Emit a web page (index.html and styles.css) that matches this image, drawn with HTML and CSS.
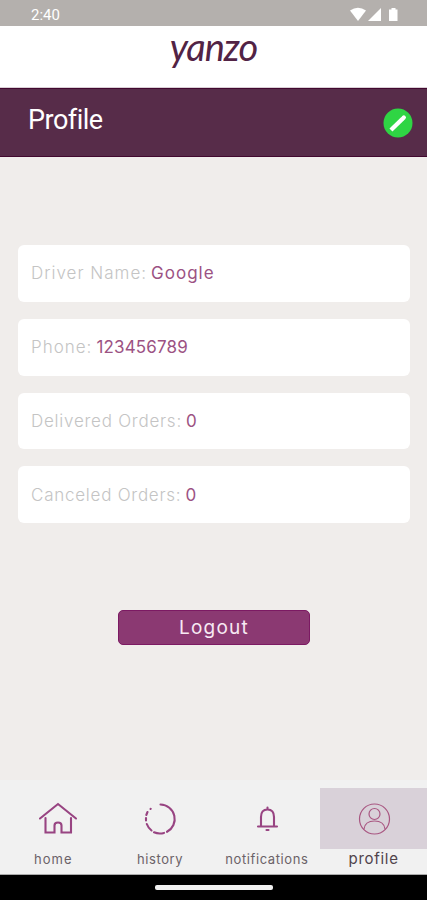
FILE: index.html
```html
<!DOCTYPE html>
<html lang="en">
  <head>
    <meta charset="utf-8">
    <title>Yanzo - Profile</title>
    <link rel="stylesheet" href="styles.css">
  </head>
  <body>
    <div class="statusbar">
      <span>2:40</span>
      <svg class="status-icons" width="50" height="16" viewBox="0 0 50 16">
        <path d="M0 3.500Q8 -2 16 3.500L8 14Z"/>
        <path d="M31 1V14H18Z"/>
        <path d="M39 2.500h2.500V1h4v1.500h2V14H39Z"/>
      </svg>
    </div>

    <header class="brand"><span class="logo">yanzo</span></header>

    <div class="titlebar">
      <h1>Profile</h1>
      <button class="edit" aria-label="Edit">
        <svg width="30" height="30" viewBox="0 0 30 30">
          <circle cx="15" cy="15" r="14.500" fill="#2fd544"/>
          <path d="M9.500 20.500L18.300 12" stroke="#fff" stroke-width="4.300" stroke-linecap="square"/>
          <path d="M20.400 10L20.800 9.600" stroke="#fff" stroke-width="4.300" stroke-linecap="round"/>
        </svg>
      </button>
    </div>

    <main>
      <ul class="details">
        <li><span class="label driver">Driver Name:</span><span class="value name">Google</span></li>
        <li><span class="label phone">Phone:</span><span class="value number">123456789</span></li>
        <li><span class="label delivered">Delivered Orders:</span><span class="value">0</span></li>
        <li><span class="label canceled">Canceled Orders:</span><span class="value">0</span></li>
      </ul>
      <button class="logout">Logout</button>
    </main>

    <!-- Bottom navigation -->
    <nav class="tabs">
      <a class="tab">
        <span class="tab-icon home-icon">
          <svg width="40" height="36" viewBox="0 0 40 36">
            <path d="M2 17.500L20 3L38 17.500M7.500 17V31.500H16.500V24.500Q16.500 21.500 20 21.500Q23.500 21.500 23.500 24.500V31.500H33V17" stroke-width="2.100"/>
          </svg>
        </span>
        <span class="tab-label home">home</span>
      </a>
      <a class="tab">
        <span class="tab-icon">
          <svg width="36" height="36" viewBox="0 0 36 36">
            <path d="M18.500 3.500A14.500 14.500 0 0 1 25 30.800M22 31.900A14.500 14.500 0 0 1 12 31.300M9.500 29.500A14.500 14.500 0 0 1 4.800 23M4 19.500V17M4.300 14L5.500 11M8.500 8L8.700 7.800" stroke-width="2.100"/>
          </svg>
        </span>
        <span class="tab-label history">history</span>
      </a>
      <a class="tab">
        <span class="tab-icon">
          <svg width="24" height="30" viewBox="0 0 24 30">
            <path d="M3 22.500H22M6 22V13Q6 5.500 12.500 5.500Q19 5.500 19 13V22M12.500 3.500V5M11.500 26H13.500" stroke-width="2.100"/>
          </svg>
        </span>
        <span class="tab-label notifications">notifications</span>
      </a>
      <a class="tab active">
        <span class="tab-icon">
          <svg width="36" height="36" viewBox="0 0 36 36" stroke-width="1.200">
            <circle cx="18.500" cy="18" r="15"/>
            <circle cx="18.500" cy="13" r="5.500"/>
            <path d="M8 28Q9 20 18.500 20Q28 20 29 28"/>
          </svg>
        </span>
        <span class="tab-label profile">profile</span>
      </a>
    </nav>

    <div class="gesture"><span class="handle"></span></div>
  </body>
</html>
```

FILE: styles.css
```css
* {
  box-sizing: border-box;
}

body {
  margin: 0;
  height: 900px;
  display: flex;
  flex-direction: column;
  overflow: hidden;
  background-color: #f0edeb;
  font-family: Inter, sans-serif;
}

button {
  border: none;
  padding: 0;
  cursor: pointer;
}

.statusbar {
  height: 26px;
  padding: 4px 27px 0 31px;
  display: flex;
  justify-content: space-between;
  align-items: center;
  background-color: #b4b0ad;
  color: white;
  font: 15px Roboto, sans-serif;
}

.status-icons {
  fill: white;
}

.brand {
  height: 62px;
  display: flex;
  justify-content: center;
  background-color: white;
  border-bottom: 1px solid #d9d0d5;
}

.logo {
  font: italic 38px/40px Lato, sans-serif;
  letter-spacing: -1px;
  color: #522345;
}

.titlebar {
  height: 69px;
  padding: 0 14px 0 28px;
  display: flex;
  justify-content: space-between;
  align-items: center;
  background-color: #572c49;
  border-top: 1px solid #42082f;
  border-bottom: 1px solid #42082f;
}

.titlebar h1 {
  margin: 0 0 5px;
  color: white;
  font: 27px Roboto, sans-serif;
  letter-spacing: -0.500px;
}

.edit {
  height: 30px;
  background: none;
}

main {
  flex: 1;
  padding: 88px 17px 0 18px;
}

.details {
  margin: 0;
  padding: 0;
  list-style: none;
  display: grid;
  gap: 17px;
}

.details li {
  height: 56.800px;
  padding: 0 13px;
  display: flex;
  align-items: center;
  gap: 4px;
  border-radius: 6px;
  background-color: white;
  font-size: 17px;
}

.label {
  color: #c4c4c4;
  font-weight: 300;
}

.value {
  color: #9c5283;
}

.driver,
.phone,
.name {
  letter-spacing: 1px;
}

.number {
  letter-spacing: 0.150px;
}

.delivered,
.canceled {
  letter-spacing: 0.750px;
}

.logout {
  display: block;
  width: 192px;
  height: 35px;
  margin: 87px 0 0 100px;
  border: 1px solid #7c1a63;
  border-radius: 5px;
  background-color: #8b3972;
  color: #f7e9f3;
  font: 19px Inter, sans-serif;
  letter-spacing: 1.200px;
}

.tabs {
  height: 95px;
  padding-top: 8px;
  display: grid;
  grid-template-columns: repeat(4, 1fr);
  background-color: #f1f1f1;
  border-bottom: 1px solid #aaa;
}

.tab {
  display: flex;
  flex-direction: column;
  align-items: center;
}

.tab-icon {
  width: 100%;
  height: 61px;
  display: flex;
  justify-content: center;
  align-items: center;
}

.home-icon {
  padding-left: 9px;
}

.tab-icon svg {
  fill: none;
  stroke: #984482;
  stroke-linecap: round;
}

.tab-label {
  line-height: 21px;
  font-size: 13px;
  letter-spacing: 0.600px;
  color: #6b6268;
}

.home {
  letter-spacing: 1.100px;
}

.active .tab-icon {
  background-color: #d9d1d9;
}

.active .tab-icon svg {
  stroke: #a95782;
}

.active .tab-label {
  line-height: 20px;
  font-size: 15px;
  letter-spacing: 0.700px;
  color: #50434b;
}

.gesture {
  height: 25px;
  display: flex;
  justify-content: center;
  align-items: center;
  background-color: black;
}

.handle {
  width: 118px;
  height: 5px;
  border-radius: 2px;
  background-color: #f1f1f1;
}
```
